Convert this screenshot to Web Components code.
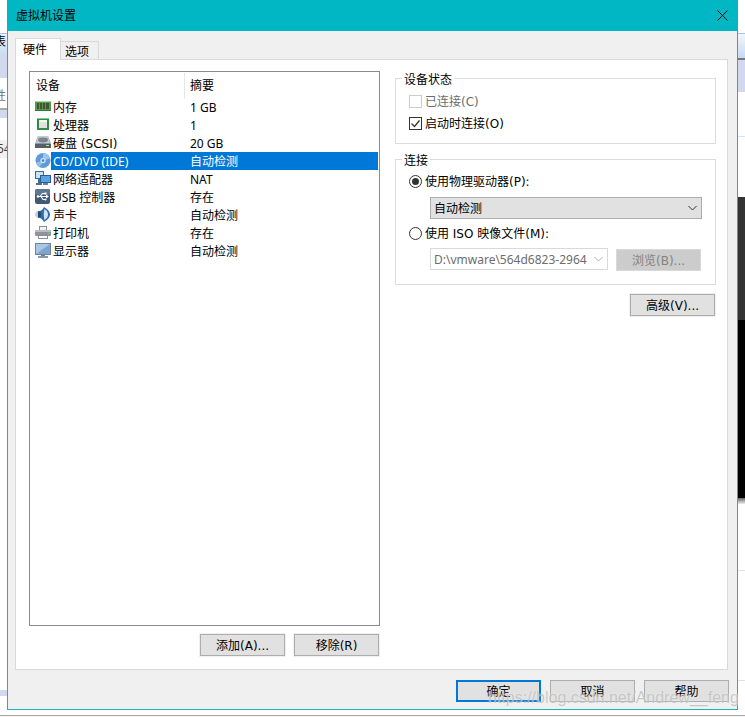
<!DOCTYPE html>
<html lang="zh">
<head>
<meta charset="utf-8">
<title>虚拟机设置</title>
<style>
html, body { margin: 0; padding: 0; background: #fff; overflow: hidden; }
body { font: 12px/16px "Noto Sans", "Noto Sans CJK SC", sans-serif; color: #000; }
.gap-row { display: flex; justify-content: flex-end; gap: 9px; }
/* the wider latin of mnemonics and the like */
.l { font-family: "DejaVu Sans", sans-serif; }
</style>
</head>
<body>

<vm-desktop>
  <vm-dialog heading="虚拟机设置">
    <vm-device-list slot="left">
      <vm-device-row><vm-icon name="ram" slot="icon"></vm-icon>内存<span slot="summary">1 GB</span></vm-device-row>
      <vm-device-row><vm-icon name="cpu" slot="icon"></vm-icon>处理器<span slot="summary">1</span></vm-device-row>
      <vm-device-row><vm-icon name="disk" slot="icon"></vm-icon>硬盘<span class="l"> (SCSI)</span><span slot="summary">20 GB</span></vm-device-row>
      <vm-device-row selected><vm-icon name="cd" slot="icon"></vm-icon>CD/DVD (IDE)<span slot="summary">自动检测</span></vm-device-row>
      <vm-device-row><vm-icon name="net" slot="icon"></vm-icon>网络适配器<span slot="summary">NAT</span></vm-device-row>
      <vm-device-row><vm-icon name="usb" slot="icon"></vm-icon>USB 控制器<span slot="summary">存在</span></vm-device-row>
      <vm-device-row><vm-icon name="sound" slot="icon"></vm-icon>声卡<span slot="summary">自动检测</span></vm-device-row>
      <vm-device-row><vm-icon name="printer" slot="icon"></vm-icon>打印机<span slot="summary">存在</span></vm-device-row>
      <vm-device-row><vm-icon name="display" slot="icon"></vm-icon>显示器<span slot="summary">自动检测</span></vm-device-row>
    </vm-device-list>
    <div slot="left-actions" class="gap-row">
      <vm-button>添加<span class="l">(A)...</span></vm-button>
      <vm-button>移除<span class="l">(R)</span></vm-button>
    </div>

    <vm-group slot="right" legend="设备状态" style="height:73px">
      <vm-choice type="check" disabled style="margin-top:7px">已连接<span class="l">(C)</span></vm-choice>
      <vm-choice type="check" checked style="margin-top:4px">启动时连接<span class="l">(O)</span></vm-choice>
    </vm-group>
    <vm-group slot="right" legend="连接" style="height:133px;margin-top:8px">
      <vm-choice type="radio" checked style="margin-top:6px">使用物理驱动器<span class="l">(P):</span></vm-choice>
      <vm-select style="width:272px;margin:7px 0 0 21px">自动检测</vm-select>
      <vm-choice type="radio" style="margin-top:5px">使用<span class="l"> ISO </span>映像文件<span class="l">(M):</span></vm-choice>
      <div style="display:flex;gap:8px;margin:6px 0 0 21px">
        <vm-select disabled style="width:178px">D:\vmware\564d6823-2964</vm-select>
        <vm-button disabled style="margin-top:1px">浏览<span class="l">(B)...</span></vm-button>
      </div>
    </vm-group>
    <div slot="right" class="gap-row" style="margin:9px 1px 0 0">
      <vm-button>高级<span class="l">(V)...</span></vm-button>
    </div>

    <vm-button slot="footer" primary>确定</vm-button>
    <vm-button slot="footer">取消</vm-button>
    <vm-button slot="footer">帮助</vm-button>
  </vm-dialog>
</vm-desktop>

<script>
// what shows around the dialog, and the blog watermark that lies on top of it
class VmDesktop extends HTMLElement {
  constructor() {
    super();
    this.attachShadow({mode: 'open'}).innerHTML = `
      <style>
      :host { display: block; position: relative; width: 745px; height: 717px; overflow: hidden; background: #fff; }
      .bg { position: absolute; }
      .txt { position: absolute; left: -6px; font-size: 12px; line-height: 16px; white-space: nowrap; }
      .content { position: relative; padding-left: 7px; }
      .mark { position: absolute; left: 488px; top: 687px; font: 16px/22px "Liberation Sans", sans-serif; white-space: nowrap;
              color: rgba(185,185,185,.75); text-shadow: 0 0 2px rgba(255,255,255,.55); }
      </style>
      <div class="bg" style="left:0;top:33px;width:7px;height:1px;background:#a9c3e6"></div>
      <div class="bg" style="left:0;top:34px;width:7px;height:24px;background:linear-gradient(#e8f0fa,#c7daf0)"></div>
      <div class="bg" style="left:0;top:58px;width:7px;height:20px;background:#d2d9ec"></div>
      <div class="bg" style="left:0;top:108px;width:7px;height:2px;background:#a8a8ad"></div>
      <div class="bg" style="left:0;top:110px;width:7px;height:8px;background:#d2d9ec"></div>
      <div class="bg" style="left:0;top:140px;width:7px;height:18px;background:#f0f0f0"></div>
      <div class="bg" style="left:0;top:690px;width:7px;height:6px;background:#d2d9ec"></div>
      <div class="bg" style="left:0;top:715px;width:745px;height:1px;background:#aaa"></div>
      <div class="bg" style="left:0;top:716px;width:745px;height:1px;background:#f0f0f0"></div>
      <div class="txt" style="top:34px;">表</div>
      <div class="txt" style="top:88px;color:#777">性</div>
      <div class="txt" style="top:141px;left:-3px;color:#444">54</div>
      <div class="bg" style="left:738px;top:33px;width:7px;height:1px;background:#a9c3e6"></div>
      <div class="bg" style="left:738px;top:34px;width:7px;height:24px;background:linear-gradient(#f2f6fc,#c7daf0)"></div>
      <div class="bg" style="left:738px;top:58px;width:7px;height:2px;background:#77777c"></div>
      <div class="bg" style="left:738px;top:60px;width:7px;height:32px;background:#d2d9ec"></div>
      <div class="bg" style="left:738px;top:136px;width:7px;height:1px;background:#d6e6f7"></div>
      <div class="bg" style="left:738px;top:197px;width:7px;height:123px;background:#333"></div>
      <div class="bg" style="left:738px;top:320px;width:7px;height:178px;background:#000"></div>
      <div class="bg" style="left:738px;top:498px;width:7px;height:6px;background:linear-gradient(#666,#eee)"></div>
      <div class="bg" style="left:738px;top:570px;width:7px;height:1px;background:#e2e2e2"></div>
      <div class="bg" style="left:738px;top:680px;width:7px;height:1px;background:#e2e2e2"></div>
      <div class="content"><slot></slot></div>
      <div class="mark">https://blog.csdn.net/Andrew__feng</div>
    `;
  }
}

class VmDialog extends HTMLElement {
  constructor() {
    super();
    const heading = this.getAttribute('heading');
    this.attachShadow({mode: 'open'}).innerHTML = `
      <style>
      :host { display: block; width: 731px; height: 710px; box-sizing: border-box; background: #f0f0f0;
              border: 1px solid #1fb0bd; border-top: 0; }
      .title { height: 31px; margin: 0 -1px; background: #00b7c3; display: flex; align-items: center; justify-content: space-between;
               padding: 0 10px 0 9px; font-size: 12px; }
      .title svg { display: block; }
      .body { padding: 7px 7px 0 7px; }
      .tabs { display: flex; align-items: flex-end; height: 22px; position: relative; z-index: 1; }
      .tab { box-sizing: border-box; border: 1px solid #d9d9d9; }
      .tab.on { width: 46px; height: 22px; background: #fff; border-bottom: 0; line-height: 21px; padding-left: 7px; }
      .tab.off { width: 38px; height: 19px; border-left: 0; line-height: 19px; padding-left: 4px; }
      .panel { box-sizing: border-box; width: 713px; height: 611px; margin-top: -1px; background: #fff; border: 1px solid #d9d9d9;
               padding: 11px 0 0 13px; display: grid; grid-template-columns: 351px 321px; column-gap: 15px; align-content: start; }
      .left { display: flex; flex-direction: column; gap: 8px; }
      .actions { margin-right: 1px; }
      .footer { display: flex; justify-content: flex-end; gap: 9px; padding: 10px 1px 0 0; }
      </style>
      <div class="title">
        <span>${heading}</span>
        <svg width="11" height="11" viewBox="0 0 11 11"><path d="M.5.5l10 10M10.5.5l-10 10" stroke="#000" fill="none"/></svg>
      </div>
      <div class="body">
        <div class="tabs"><div class="tab on">硬件</div><div class="tab off">选项</div></div>
        <div class="panel">
          <div class="left">
            <slot name="left"></slot>
            <div class="actions"><slot name="left-actions"></slot></div>
          </div>
          <div><slot name="right"></slot></div>
        </div>
        <div class="footer"><slot name="footer"></slot></div>
      </div>
    `;
  }
}

class VmDeviceList extends HTMLElement {
  constructor() {
    super();
    this.attachShadow({mode: 'open'}).innerHTML = `
      <style>
      :host { display: block; box-sizing: border-box; height: 555px; border: 1px solid #8a8a90; background: #fff; }
      .head { display: grid; grid-template-columns: 154px 1fr; height: 26px; }
      .head div { line-height: 28px; padding-left: 6px; }
      .head div + div { border-left: 1px solid #e5e5e5; padding-left: 5px; margin: 1px 0 2px; line-height: 26px; }
      </style>
      <div class="head"><div>设备</div><div>摘要</div></div>
      <slot></slot>
    `;
  }
}

class VmDeviceRow extends HTMLElement {
  constructor() {
    super();
    this.attachShadow({mode: 'open'}).innerHTML = `
      <style>
      :host { display: flex; height: 18px; line-height: 19px; margin-right: 1px; padding-left: 5px; white-space: nowrap; }
      .icon { width: 16px; height: 18px; flex: none; display: flex; align-items: center; }
      .cells { flex: 1; display: grid; grid-template-columns: 133px 1fr; }
      .name { padding-left: 2px; }
      .sum { padding-left: 6px; }
      :host([selected]) .cells { background: #0078d7; color: #fff; }
      </style>
      <div class="icon"><slot name="icon"></slot></div>
      <div class="cells">
        <div class="name"><slot></slot></div>
        <div class="sum"><slot name="summary"></slot></div>
      </div>
    `;
  }
}

const ICONS = {
  ram: `<rect x="0" y="2" width="16" height="10" fill="#4e9e45"/><rect x="0" y="2" width="16" height="1" fill="#a5dc97"/>
        <rect x="2" y="4" width="2" height="6" fill="#4a4f3a"/><rect x="5" y="4" width="2" height="6" fill="#4a4f3a"/><rect x="8" y="4" width="2" height="6" fill="#4a4f3a"/><rect x="11" y="4" width="3" height="6" fill="#4a4f3a"/>
        <rect x="0" y="11" width="16" height="1" fill="#2f7a32"/>`,
  cpu: `<rect x="2" y="1" width="12" height="12" fill="#2f8d45"/><rect x="2" y="1" width="12" height="1" fill="#7fcb87"/>
        <rect x="4" y="3" width="8" height="8" fill="#dfe4df"/><rect x="4" y="3" width="8" height="2" fill="#f4f6f4"/>`,
  disk: `<path d="M3 1h10l3 8v4H0V9z" fill="#8d97a3"/><path d="M3 1h10l2 7H1z" fill="#c3c9d1"/><ellipse cx="8" cy="5" rx="5" ry="2.4" fill="#7a838e"/>
         <rect x="0" y="9" width="16" height="4" fill="#56606b"/><rect x="11" y="10" width="3" height="1" fill="#a7e27a"/>`,
  cd: `<circle cx="8" cy="7.5" r="7.5" fill="#5f9bd8"/><path d="M8 0A7.5 7.5 0 0 1 15 5.5L9.5 7 8 5.5z" fill="#9cc5ec"/><path d="M1 9.5l6-1.2.8 1.6L4 13.900A7.5 7.5 0 0 1 1 9.5z" fill="#94bfe9"/>
       <circle cx="8" cy="7.5" r="2.6" fill="#d6e6f6"/><circle cx="8" cy="7.5" r="1.2" fill="#3f78b8"/>`,
  net: `<rect x="0" y="0" width="9" height="8" fill="#2d6aa8"/><rect x="1" y="1" width="7" height="6" fill="#cfe3f5"/><rect x="3" y="8" width="3" height="4" fill="#3d6d99"/>
        <rect x="5" y="4" width="11" height="8" fill="#1f5f9f"/><rect x="6" y="5" width="9" height="6" fill="#5aa2e2"/><rect x="8" y="12" width="5" height="2" fill="#6d7f91"/><rect x="1" y="12" width="6" height="2" fill="#52708e"/>`,
  usb: `<rect x="0" y="0" width="15" height="15" rx="2" fill="#3e5a76"/><rect x="0" y="0" width="15" height="6" rx="2" fill="#5b7791"/>
        <path d="M2.5 7.5H12M5 7.5l2.5-3H10M6 7.5l2 3h2" stroke="#fff" stroke-width="1.1" fill="none"/><circle cx="3" cy="7.5" r="1.3" fill="#fff"/><path d="M11 5.5l3 2-3 2z" fill="#fff"/><rect x="9.5" y="3.5" width="2" height="2" fill="#fff"/><circle cx="10.5" cy="10.5" r="1" fill="#fff"/>`,
  sound: `<path d="M9 0c3 2 6 4 6 7.500s-3 5.500-6 7.500c-1-2-2-3-4-4H3V4h2c2-1 3-2 4-4z" fill="#2f6cae"/><path d="M9.500 2c2 1 3.500 3 3.500 5.500S11.500 12 9.500 13c-1-3.500-1-7.500 0-11z" fill="#cfe2f4"/>
          <path d="M3 4C1 5 0 6 0 7.500S1 10 3 11z" fill="#c7cdd3"/><path d="M3 5h3v5H3z" fill="#27496d"/>`,
  printer: `<rect x="4.500" y="1.500" width="7" height="4" fill="#f2f2f2" stroke="#8a8f96"/><rect x="0" y="5" width="16" height="6" rx="1" fill="#8e949b"/><rect x="0" y="5" width="16" height="2" fill="#b9bdc2"/>
            <rect x="13" y="8" width="2" height="1" fill="#6fd06f"/><rect x="3.500" y="10.500" width="9" height="3" fill="#fff" stroke="#8a8f96"/>`,
  display: `<rect x="0" y="0" width="16" height="12" fill="#6f8498"/><rect x="1" y="1" width="14" height="10" fill="#7da6cf"/><path d="M1 11V1h14z" fill="#a9c8e6"/>
            <rect x="6" y="12" width="4" height="1" fill="#6f7d8a"/><rect x="3" y="13" width="10" height="2" fill="#8c99a5"/>`
};

class VmIcon extends HTMLElement {
  constructor() {
    super();
    const name = this.getAttribute('name');
    this.attachShadow({mode: 'open'}).innerHTML = `
      <style>:host { display: block; width: 16px; height: 16px; } svg { display: block; }</style>
      <svg width="16" height="16" viewBox="0 0 16 16">${ICONS[name]}</svg>
    `;
  }
}

class VmGroup extends HTMLElement {
  constructor() {
    super();
    const legend = this.getAttribute('legend');
    this.attachShadow({mode: 'open'}).innerHTML = `
      <style>
      :host { display: block; box-sizing: border-box; }
      fieldset { box-sizing: border-box; height: 100%; margin: 0; padding: 0 13px; border: 1px solid #dcdcdc; }
      legend { padding: 0 2px; margin-left: -7px; line-height: 17px; height: 14px; }
      </style>
      <fieldset><legend>${legend}</legend><slot></slot></fieldset>
    `;
  }
}

class VmChoice extends HTMLElement {
  constructor() {
    super();
    const radio = this.getAttribute('type') == 'radio';
    const checked = this.hasAttribute('checked');
    let mark;
    if (radio) {
      mark = `<circle cx="6.5" cy="6.5" r="6" fill="#fff" stroke="#333"/>` + (checked ? `<circle cx="6.5" cy="6.5" r="3.5" fill="#333"/>` : '');
    } else {
      mark = `<rect x=".5" y=".5" width="12" height="12" fill="#fff" stroke="currentColor"/>` + (checked ? `<path d="M2.5 6.5l3 3 5-6" fill="none" stroke="#333" stroke-width="1.3"/>` : '');
    }
    this.attachShadow({mode: 'open'}).innerHTML = `
      <style>
      :host { display: flex; align-items: center; gap: 3px; height: 18px; white-space: nowrap; color: #333; }
      :host([disabled]) { color: #6d6d6d; }
      :host([disabled]) svg { color: #ccc; }
      svg { display: block; flex: none; }
      .t { color: #000; padding-top: 1px; white-space: pre; }
      :host([disabled]) .t { color: #6d6d6d; }
      </style>
      <svg width="13" height="13" viewBox="0 0 13 13">${mark}</svg>
      <span class="t"><slot></slot></span>
    `;
  }
}

class VmSelect extends HTMLElement {
  constructor() {
    super();
    this.attachShadow({mode: 'open'}).innerHTML = `
      <style>
      :host { display: flex; align-items: center; box-sizing: border-box; height: 22px; padding: 0 4px 0 3px; background: #e1e1e1;
              border: 1px solid #adadad; white-space: nowrap; overflow: hidden; }
      :host([disabled]) { background: #fff; border-color: #d9d9d9; color: #6d6d6d; }
      .v { flex: 1; overflow: hidden; padding-top: 2px; }
      svg { display: block; flex: none; color: #333; margin-left: 4px; }
      :host([disabled]) svg { color: #adadad; }
      </style>
      <span class="v"><slot></slot></span>
      <svg width="9" height="6" viewBox="0 0 9 6"><path d="M.5 1l4 4 4-4" fill="none" stroke="currentColor"/></svg>
    `;
  }
}

class VmButton extends HTMLElement {
  constructor() {
    super();
    this.attachShadow({mode: 'open'}).innerHTML = `
      <style>
      :host { display: flex; align-items: center; justify-content: center; box-sizing: border-box; width: 85px; height: 22px; padding-top: 2px;
              background: #e1e1e1; border: 1px solid #adadad; box-shadow: 0 0 0 1px #f0f0f0; white-space: nowrap; }
      :host([primary]) { border: 2px solid #0078d7; box-shadow: none; }
      :host([disabled]) { background: #ccc; border-color: #d9d9d9; box-shadow: none; color: #838383; }
      </style>
      <span><slot></slot></span>
    `;
  }
}

customElements.define('vm-desktop', VmDesktop);
customElements.define('vm-dialog', VmDialog);
customElements.define('vm-device-list', VmDeviceList);
customElements.define('vm-device-row', VmDeviceRow);
customElements.define('vm-icon', VmIcon);
customElements.define('vm-group', VmGroup);
customElements.define('vm-choice', VmChoice);
customElements.define('vm-select', VmSelect);
customElements.define('vm-button', VmButton);
</script>
</body>
</html>
